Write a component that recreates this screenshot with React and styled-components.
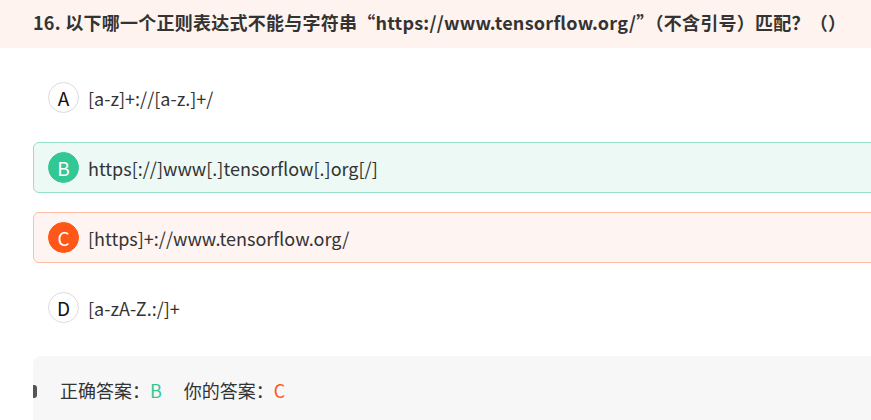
import React from "react";
import styled, { createGlobalStyle } from "styled-components";

const GlobalStyle = createGlobalStyle`
  html, body {
    margin: 0;
    padding: 0;
    background: #fff;
    overflow: hidden;
  }
  body {
    font-family: "Noto Sans CJK SC", "Noto Sans", sans-serif;
    color: #333;
  }
`;

const Page = styled.div`
  width: 871px;
  height: 420px;
  overflow: hidden;
`;

const Title = styled.div`
  height: 48px;
  box-sizing: border-box;
  padding: 0 0 4px 33px;
  display: flex;
  align-items: center;
  background: #fef3ef;
  font-size: 18px;
  font-weight: 700;
  letter-spacing: 0.25px;
  color: #333;
  white-space: nowrap;
`;

const Body = styled.div`
  width: 920px;
  padding: 24px 0 0 33px;
  display: flex;
  flex-direction: column;
  gap: 19px;
`;

const palette = {
  right: { bg: "#edf9f5", border: "#95e0c5", dot: "#33c796" },
  wrong: { bg: "#fef4f1", border: "#ffbea3", dot: "#ff5718" },
};

const Option = styled.div`
  height: 51px;
  box-sizing: border-box;
  display: flex;
  align-items: center;
  gap: 9px;
  padding-left: 14px;
  border-radius: 6px;
  border: 1px solid ${(p) => (p.$state ? palette[p.$state].border : "transparent")};
  background: ${(p) => (p.$state ? palette[p.$state].bg : "transparent")};
`;

const Letter = styled.span`
  width: 31px;
  height: 31px;
  box-sizing: border-box;
  border-radius: 50%;
  display: flex;
  align-items: center;
  justify-content: center;
  font-size: 19px;
  flex-shrink: 0;
  color: ${(p) => (p.$state ? "#fff" : "#111")};
  background: ${(p) => (p.$state ? palette[p.$state].dot : "#fff")};
  border: 1px solid ${(p) => (p.$state ? palette[p.$state].dot : "#dcdcdc")};
`;

const OptionText = styled.span`
  font-size: 18px;
  color: #333;
  white-space: nowrap;
`;

const Answer = styled.div`
  margin-top: 4px;
  height: 80px;
  border-radius: 8px 0 0 0;
  background: #f7f7f7;
  display: flex;
  align-items: flex-start;
  padding-top: 21px;
  box-sizing: border-box;
  position: relative;
  overflow: hidden;
  font-size: 18px;
`;

const Marker = styled.span`
  position: absolute;
  left: -3px;
  top: 29px;
  width: 7px;
  height: 13px;
  border-radius: 3px;
  background: #555;
`;

const AnswerItem = styled.span`
  margin-left: ${(p) => (p.$first ? "27px" : "22px")};
`;

const Mark = styled.span`
  color: ${(p) => p.$color};
`;

const options = [
  { key: "A", text: "[a-z]+://[a-z.]+/" },
  { key: "B", text: "https[://]www[.]tensorflow[.]org[/]", state: "right" },
  { key: "C", text: "[https]+://www.tensorflow.org/", state: "wrong" },
  { key: "D", text: "[a-zA-Z.:/]+" },
];

export default function App() {
  return (
    <Page>
      <GlobalStyle />
      <Title>16. 以下哪一个正则表达式不能与字符串“https://www.tensorflow.org/”（不含引号）匹配？（）</Title>
      <Body>
        {options.map((o) => (
          <Option key={o.key} $state={o.state}>
            <Letter $state={o.state}>{o.key}</Letter>
            <OptionText>{o.text}</OptionText>
          </Option>
        ))}
        <Answer>
          <Marker />
          <AnswerItem $first>
            正确答案：<Mark $color="#33c796">B</Mark>
          </AnswerItem>
          <AnswerItem>
            你的答案：<Mark $color="#ff5718">C</Mark>
          </AnswerItem>
        </Answer>
      </Body>
    </Page>
  );
}
